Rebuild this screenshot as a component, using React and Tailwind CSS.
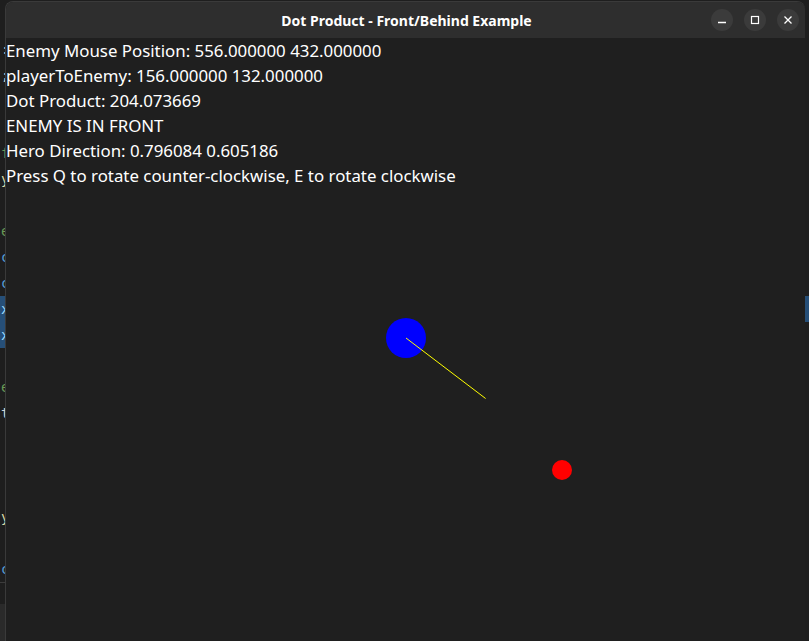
const LINES = [
  'Enemy Mouse Position: 556.000000 432.000000',
  'playerToEnemy: 156.000000 132.000000',
  'Dot Product: 204.073669',
  'ENEMY IS IN FRONT',
  'Hero Direction: 0.796084 0.605186',
  'Press Q to rotate counter-clockwise, E to rotate clockwise',
]

// last visible char of each editor line behind the window (line index -> glyph)
const EDGE = [
  { ch: ':', cls: 'text-[#d4d4d4]' },
  { ch: ';', cls: 'text-[#d4d4d4]' },
  {}, {},
  { ch: 'f', cls: 'text-[#6a9955]' },
  { ch: 'y', cls: 'text-[#dcdcaa]' },
  {},
  { ch: 'e', cls: 'text-[#6a9955]' },
  { ch: 'c', cls: 'text-[#569cd6]' },
  { ch: 'c', cls: 'text-[#569cd6]' },
  { ch: 'x', cls: 'text-[#9cdcfe] bg-[#264f78]' },
  { ch: 'x', cls: 'text-[#9cdcfe] bg-[#264f78]' },
  {},
  { ch: 'e', cls: 'text-[#6a9955]' },
  { ch: 't', cls: 'text-[#d4d4d4]' },
  {}, {}, {},
  { ch: 'y', cls: 'text-[#dcdcaa]' },
  {},
  { ch: 'c', cls: 'text-[#569cd6]' },
]

function CtrlBtn({ children }) {
  return (
    <div className="w-[22px] h-[22px] rounded-full bg-[#3b3b3b] flex items-center justify-center text-white">
      {children}
    </div>
  )
}

function Editor() {
  return (
    <div className="absolute inset-0 flex justify-between bg-[#1e1e1e]">
      <div className="w-[20px] flex flex-col pt-[36px] font-['DejaVu_Sans_Mono',monospace] text-[14px]">
        {EDGE.map((e, i) => (
          <div key={i} className={'h-[26px] flex items-center pl-[1px] ' + (e.cls || '')}>{e.ch}</div>
        ))}
        <div className="h-[22px] border-t border-[#3c3c3c]" />
        <div className="flex-1 bg-[#2a2a2a]" />
      </div>
      <div className="w-[4px] flex flex-col pt-[296px]">
        <div className="h-[26px] bg-[#264f78]" />
      </div>
    </div>
  )
}

export default function App() {
  return (
    <div className="relative w-[809px] h-[641px] overflow-hidden">
      <Editor />

      <div className="absolute left-[5px] top-[1px] w-[800px] h-[660px] flex flex-col rounded-t-lg overflow-hidden border-l border-t border-[#3a3a3a]">
        <div className="h-[36px] bg-[#2e2e2e] flex items-center justify-between pl-[96px] pr-[6px] shrink-0">
          <div className="flex-1 text-center text-white font-bold text-[14px] font-['Noto_Sans',sans-serif]">
            Dot Product - Front/Behind Example
          </div>
          <div className="flex gap-[11px]">
            <CtrlBtn>
              <svg width="10" height="10" viewBox="0 0 10 10"><path d="M1 7.5h8" stroke="currentColor" strokeWidth="1.3" /></svg>
            </CtrlBtn>
            <CtrlBtn>
              <svg width="10" height="10" viewBox="0 0 10 10"><rect x="1.5" y="1.5" width="7" height="7" fill="none" stroke="currentColor" strokeWidth="1.2" /></svg>
            </CtrlBtn>
            <CtrlBtn>
              <svg width="10" height="10" viewBox="0 0 10 10"><path d="M1.5 1.5l7 7M8.5 1.5l-7 7" stroke="currentColor" strokeWidth="1.3" /></svg>
            </CtrlBtn>
          </div>
        </div>

        <div className="relative flex-1 bg-[#1f1f1f]">
          <div className="text-white text-[16.85px] leading-[25px] font-['Noto_Sans',sans-serif]">
            {LINES.map(l => <p key={l}>{l}</p>)}
          </div>
          <svg className="absolute left-0 top-0" width="800" height="600">
            <circle cx="400" cy="300" r="20" fill="#0000ff" />
            <line x1="400" y1="300" x2="479.6" y2="360.5" stroke="#ffff00" strokeWidth="1" />
            <circle cx="556" cy="432" r="10" fill="#ff0000" />
          </svg>
        </div>
      </div>
    </div>
  )
}
